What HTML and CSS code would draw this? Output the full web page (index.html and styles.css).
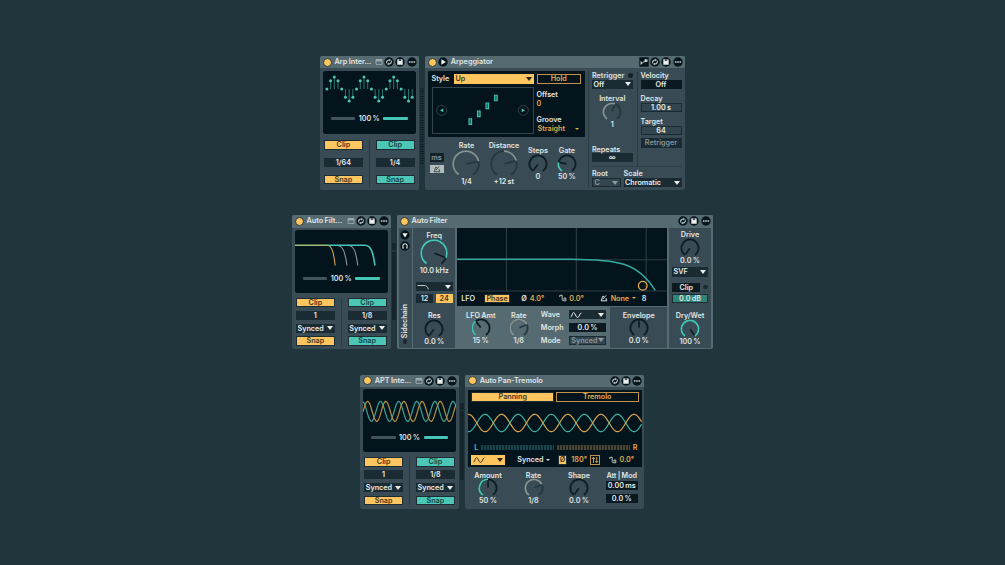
FILE: index.html
```html
<!DOCTYPE html>
<html lang="en">
<head>
    <meta charset="UTF-8">
    <meta name="viewport" content="width=device-width, initial-scale=1.0">
    <title>Modulators</title>
    <link rel="stylesheet" href="styles.css">
</head>
<body>
    <!-- Shared icons -->
    <svg class="defs">
        <symbol id="i-swap" viewBox="0 0 10 10">
            <circle cx="5" cy="5" r="4.7" fill="#07161d"/>
            <path d="M2.6 6.3C2.2 4.2 3.8 2.7 5.8 3M7.4 3.7C7.8 5.8 6.2 7.3 4.2 7" fill="none" stroke="#b9c6c8" stroke-width="1.1"/>
            <path d="M5.2 1.6L7 3.1 5.2 4.5zM4.8 8.4L3 6.9 4.8 5.5z" fill="#b9c6c8"/>
        </symbol>
        <symbol id="i-save" viewBox="0 0 10 10">
            <circle cx="5" cy="5" r="4.7" fill="#07161d"/>
            <path d="M2.3 2.3H7L7.7 3V7.7H2.3z" fill="#eaefed"/>
            <path d="M3.8 2.3H6.2V4H3.8z" fill="#3b4d55"/>
        </symbol>
        <symbol id="i-more" viewBox="0 0 10 10">
            <circle cx="5" cy="5" r="4.7" fill="#07161d"/>
            <path d="M1.9 4.3h1.600v1.500H1.9zM4.2 4.3h1.600v1.500h-1.600zM6.5 4.3H8.100v1.500H6.5z" fill="#c9d3d3"/>
        </symbol>
        <symbol id="i-window" viewBox="0 0 8 8">
            <path d="M1 1.6H7V6.4H1zM1 3H7" fill="none" stroke="#a5b2b4" stroke-width=".8"/>
            <path d="M1 1.3H7V2.8H1z" fill="#a5b2b4"/>
        </symbol>
        <symbol id="i-steps" viewBox="0 0 10 10">
            <path d="M.3.3H9.7V9.7H.3z" fill="#07161d"/>
            <path d="M1.6 4L4 6 1.6 8zM4.2 4.2h1.400v1.400H4.200zM5.600 2.200h2.800v2.800H5.600z" fill="#c9d3d3"/>
        </symbol>
        <symbol id="i-play" viewBox="0 0 10 10">
            <circle cx="5" cy="5" r="4.7" fill="#07161d"/>
            <path d="M3.4 2.2L7.8 5 3.4 7.8z" fill="#f2f5f4"/>
        </symbol>
        <symbol id="i-down" viewBox="0 0 10 10">
            <circle cx="5" cy="5" r="4.7" fill="#07161d"/>
            <path d="M2.4 3.2H7.6L5 7.6z" fill="#f2f5f4"/>
        </symbol>
        <symbol id="i-phones" viewBox="0 0 10 10">
            <circle cx="5" cy="5" r="4.7" fill="#07161d"/>
            <path d="M3.9 7H2.900V4.900A2.1 2.1 0 0 1 7.100 4.900V7H6.100" fill="none" stroke="#d3dcdb" stroke-width="1.100"/>
        </symbol>
        <symbol id="i-offset" viewBox="0 0 8 8">
            <path d="M.8 3V1.300H3.200V5.600C3.200 7 5 7 5 5.600V4H6.800V6.800H4.600" fill="none" stroke="#b9c3c2" stroke-width="1"/>
        </symbol>
        <symbol id="i-metro" viewBox="0 0 8 8">
            <path d="M1.2 6.8H6.8L6 4.200M1.2 6.8L2.6 2.4H4M3 5.2L6 1.400" fill="none" stroke="currentColor" stroke-width="1"/>
        </symbol>
        <symbol id="i-sine" viewBox="0 0 12 8">
            <path d="M.6 6C2.200 6 2 1.600 3.600 1.600S5.600 6.400 7.600 6.400 9.400 2 11.400 2" fill="none" stroke="currentColor" stroke-width="1"/>
        </symbol>
        <symbol id="i-flip" viewBox="0 0 8 8">
            <path d="M2.500 7V1.800M1 3L2.500 1.200 4 3M5.700 1V6.200M4.200 5L5.700 6.800 7.200 5" fill="none" stroke="currentColor" stroke-width=".9"/>
        </symbol>
    </svg>

    <main class="rack">
        <!-- Arpeggiator -->
        <section class="chain">
            <article class="device mod">
                <header class="bar">
                    <i class="power"></i><h2>Arp Inter...</h2>
                    <svg class="win"><use href="#i-window"/></svg><svg class="ico"><use href="#i-swap"/></svg><svg class="ico"><use href="#i-save"/></svg><svg class="ico"><use href="#i-more"/></svg>
                </header>
                <div class="screen">
                    <svg class="wave" id="stems" viewBox="0 0 93 38"></svg>
                    <div class="mix"><i></i><span>100 %</span><i class="on"></i></div>
                </div>
                <div class="pair roomy">
                    <div class="side"><b class="chip amber">Clip</b><span class="box">1/64</span><b class="chip amber">Snap</b></div>
                    <div class="side"><b class="chip teal">Clip</b><span class="box">1/4</span><b class="chip teal">Snap</b></div>
                </div>
            </article>
            <div class="link dots"></div>
            <article class="device arp">
                <header class="bar">
                    <i class="power"></i><svg class="ico"><use href="#i-play"/></svg><h2>Arpeggiator</h2>
                    <svg class="ico"><use href="#i-steps"/></svg><svg class="ico"><use href="#i-swap"/></svg><svg class="ico"><use href="#i-save"/></svg><svg class="ico"><use href="#i-more"/></svg>
                </header>
                <div class="arp-body">
                    <div class="arp-main">
                        <div class="arp-screen">
                            <div class="arp-left">
                                <div class="style"><span>Style</span><b class="select amber">Up</b></div>
                                <svg class="pattern" viewBox="0 0 102 47">
                                    <rect x=".5" y=".5" width="101" height="46" fill="none" stroke="#34454e"/>
                                    <g fill="none" stroke="#34454e" stroke-width=".9"><circle cx="9.7" cy="23.3" r="5"/><circle cx="91.3" cy="23.3" r="5"/></g>
                                    <path d="M11.3 21.4v3.8L8 23.3zM89.7 21.4v3.8l3.3-1.9z" fill="#45c5b5"/>
                                    <g fill="#17655f" stroke="#3fbfae" stroke-width="1.1"><path d="M37 31.8h2.6v5.6H37zM45.5 24h2.6v5.6h-2.6zM54 16h2.6v5.6H54zM62.6 8.2h2.6v5.6h-2.6z"/></g>
                                </svg>
                            </div>
                            <div class="arp-opts">
                                <b class="outline">Hold</b>
                                <span class="t8 mt1">Offset</span><span class="gold">0</span>
                                <span class="t8 mt2">Groove</span><span class="gold groove">Straight <i class="tri"></i></span>
                            </div>
                        </div>
                        <div class="arp-knobs">
                            <div class="sync"><span>ms</span><span class="sel"><svg><use href="#i-metro"/></svg></span></div>
                            <div class="knob big w37" data-to="78" data-tone="gray"><span>Rate</span><em>1/4</em></div>
                            <div class="knob big w37" data-from="0" data-to="75" data-tone="gray"><span>Distance</span><em>+12 st</em></div>
                            <div class="knob w30" data-to="-145"><span>Steps</span><em>0</em></div>
                            <div class="knob w27" data-to="-78"><span>Gate</span><em>50 %</em></div>
                        </div>
                    </div>
                    <div class="arp-side">
                        <div class="arp-cols">
                            <div class="col">
                                <span class="t8 led">Retrigger</span><b class="select">Off</b>
                                <div class="knob interval" data-to="20" data-tone="gray"><span>Interval</span><em>1</em></div>
                                <span class="t8 rep">Repeats</span><b class="box">∞</b>
                            </div>
                            <div class="col line">
                                <span class="t8">Velocity</span><b class="box flat">Off</b>
                                <span class="t8 gap">Decay</span><b class="box ring">1.00 s</b>
                                <span class="t8 gap">Target</span><b class="box ring">64</b>
                                <b class="box dim">Retrigger</b>
                            </div>
                        </div>
                        <div class="scale">
                            <div><span class="t8">Root</span><b class="select off">C</b></div>
                            <div><span class="t8">Scale</span><b class="select">Chromatic</b></div>
                        </div>
                    </div>
                </div>
            </article>
        </section>

        <!-- Auto Filter -->
        <section class="chain">
            <article class="device mod">
                <header class="bar">
                    <i class="power"></i><h2>Auto Filt...</h2>
                    <svg class="win"><use href="#i-window"/></svg><svg class="ico"><use href="#i-swap"/></svg><svg class="ico"><use href="#i-save"/></svg><svg class="ico"><use href="#i-more"/></svg>
                </header>
                <div class="screen">
                    <svg class="wave" viewBox="0 0 93 38">
                        <g class="curves">
                            <path d="M32 15.2C37 15.5 38.5 22 40.2 35.5" stroke="#d7a54d"/>
                            <path d="M42 15.2C48 15.5 50 22 52 35.5" stroke="#8b9799"/>
                            <path d="M53 15.2C59 15.5 61 22 62.8 35.5" stroke="#8b9799"/>
                            <path class="main" d="M33 15.2H70C76 15.5 78 22 80 35.5" stroke="#45c5b5"/>
                            <path class="main" d="M0 15.2H33" stroke="#9dbb77"/>
                        </g>
                    </svg>
                    <div class="mix"><i></i><span>100 %</span><i class="on"></i></div>
                </div>
                <div class="pair">
                    <div class="side"><b class="chip amber">Clip</b><span class="box">1</span><b class="select">Synced</b><b class="chip amber">Snap</b></div>
                    <div class="side"><b class="chip teal">Clip</b><span class="box">1/8</span><b class="select">Synced</b><b class="chip teal">Snap</b></div>
                </div>
            </article>
            <div class="link"></div>
            <article class="device filter">
                <header class="bar">
                    <i class="power"></i><h2>Auto Filter</h2>
                    <svg class="ico"><use href="#i-swap"/></svg><svg class="ico"><use href="#i-save"/></svg><svg class="ico"><use href="#i-more"/></svg>
                </header>
                <div class="filter-body">
                    <div class="panel sidechain">
                        <svg class="ico"><use href="#i-down"/></svg><svg class="ico"><use href="#i-phones"/></svg>
                        <span>Sidechain</span><i class="dot"></i>
                    </div>
                    <div class="panel freq">
                        <div class="knob big" data-to="112"><span>Freq</span><em>10.0 kHz</em></div>
                        <b class="select shape"><svg viewBox="0 0 12 8"><path d="M.5 2.5H7C9.5 2.5 11 4 11.3 6.5" fill="none" stroke="#b9c3c2"/></svg></b>
                        <div class="slopes"><b>12</b><b class="amber">24</b></div>
                        <div class="knob" data-to="-145"><span>Res</span><em>0.0 %</em></div>
                    </div>
                    <div class="center">
                        <div class="display">
                            <svg viewBox="0 0 211 64">
                                <path d="M49.5 0V63M119.5 0V63M189.5 0V63M0 31.8H211M0 63H211" stroke="#303c42" stroke-width="1.1" fill="none"/>
                                <path d="M0 31.2H115C160 31.5 181 34 198.5 62.5" stroke="#36aa9e" stroke-width="1.4" fill="none"/>
                                <circle cx="186" cy="57.8" r="4.3" fill="none" stroke="#e5ad4e" stroke-width="1.3"/>
                            </svg>
                            <div class="lfo">
                                <span>LFO</span><b class="chip amber">Phase</b>
                                <span class="phase">Ø <u>4.0°</u></span>
                                <span class="offs"><svg><use href="#i-offset"/></svg><u>0.0°</u></span>
                                <span class="quant"><svg><use href="#i-metro"/></svg><u>None</u><i class="tri"></i></span><span>8</span>
                            </div>
                        </div>
                        <div class="lower">
                            <div class="knob w48" data-to="-38"><span>LFO Amt</span><em>15 %</em></div>
                            <div class="knob w28" data-to="65" data-tone="gray"><span>Rate</span><em>1/8</em></div>
                            <div class="params">
                                <span>Wave</span><b class="select"><svg><use href="#i-sine"/></svg></b>
                                <span>Morph</span><b class="box flat">0.0 %</b>
                                <span>Mode</span><b class="select off">Synced</b>
                            </div>
                            <div class="panel env"><div class="knob" data-from="0" data-to="0"><span>Envelope</span><em>0.0 %</em></div></div>
                        </div>
                    </div>
                    <div class="panel out">
                        <div class="knob" data-to="-145"><span>Drive</span><em>0.0 %</em></div>
                        <b class="select">SVF</b>
                        <div class="cliprow"><b class="box flat">Clip</b><i class="dot"></i></div>
                        <b class="db">0.0 dB</b>
                        <div class="knob" data-to="145"><span>Dry/Wet</span><em>100 %</em></div>
                    </div>
                </div>
            </article>
        </section>

        <!-- Auto Pan-Tremolo -->
        <section class="chain">
            <article class="device mod">
                <header class="bar">
                    <i class="power"></i><h2>APT Inte...</h2>
                    <svg class="win"><use href="#i-window"/></svg><svg class="ico"><use href="#i-swap"/></svg><svg class="ico"><use href="#i-save"/></svg><svg class="ico"><use href="#i-more"/></svg>
                </header>
                <div class="screen">
                    <svg class="wave" viewBox="0 0 93 38">
                        <path data-sine="17.5,22.4,10,18.15,93" stroke="#36a496"/>
                        <path data-sine="22.8,22.4,10,18.15,93" stroke="#b99146"/>
                    </svg>
                    <div class="mix"><i></i><span>100 %</span><i class="on"></i></div>
                </div>
                <div class="pair">
                    <div class="side"><b class="chip amber">Clip</b><span class="box">1</span><b class="select">Synced</b><b class="chip amber">Snap</b></div>
                    <div class="side"><b class="chip teal">Clip</b><span class="box">1/8</span><b class="select">Synced</b><b class="chip teal">Snap</b></div>
                </div>
            </article>
            <div class="link"></div>
            <article class="device pan">
                <header class="bar">
                    <i class="power"></i><h2>Auto Pan-Tremolo</h2>
                    <svg class="ico"><use href="#i-swap"/></svg><svg class="ico"><use href="#i-save"/></svg><svg class="ico"><use href="#i-more"/></svg>
                </header>
                <div class="pan-screen">
                    <div class="tabs"><b class="chip amber">Panning</b><b class="outline">Tremolo</b></div>
                    <svg class="pan-wave" viewBox="0 0 174 40">
                        <path data-sine="17.1,21,8.7,33.2,174" stroke="#3cb3a4"/>
                        <path data-sine="0.5,21,8.7,33.2,174" stroke="#dba64c"/>
                    </svg>
                    <div class="level"><span>L</span><i></i><i class="r"></i><u>R</u></div>
                    <div class="pan-row">
                        <b class="select amber"><svg><use href="#i-sine"/></svg></b>
                        <span class="sync-sel">Synced <i class="tri"></i></span>
                        <b class="chip amber phi">Ø</b><u>180°</u><b class="outline flip"><svg><use href="#i-flip"/></svg></b>
                        <span class="offs"><svg><use href="#i-offset"/></svg><u>0.0°</u></span>
                    </div>
                </div>
                <div class="pan-knobs">
                    <div class="knob" data-to="0"><span>Amount</span><em>50 %</em></div>
                    <div class="knob" data-to="65" data-tone="gray"><span>Rate</span><em>1/8</em></div>
                    <div class="knob" data-to="-145"><span>Shape</span><em>0.0 %</em></div>
                    <div class="att"><span>Att | Mod</span><b class="box flat">0.00 ms</b><b class="box flat">0.0 %</b></div>
                </div>
            </article>
        </section>
    </main>
    <script src="script.js"></script>
</body>
</html>
```
FILE: styles.css
```css
* { box-sizing: border-box; }

body {
    margin: 0;
    height: 565px;
    overflow: hidden;
    background: #21353d;
    color: #e2e7e4;
    font: 600 7.2px/9px Inter, "Liberation Sans", sans-serif;
    word-spacing: -.5px;
}

h2 { margin: 0; font-size: 7.3px; font-weight: 600; line-height: 12px; white-space: nowrap; }
b { font-weight: 600; }
em { font-style: normal; }
u { text-decoration: none; color: #e5ad4e; }
svg { display: block; flex: none; }
.defs { display: none; }

.rack { width: 1004.5px; padding-top: 56px; display: flex; flex-direction: column; gap: 25.3px; }
.chain { display: flex; justify-content: center; height: 134px; }

.device {
    flex: none;
    display: flex;
    flex-direction: column;
    background: #394b55;
    border-radius: 2px;
    overflow: hidden;
}
.mod { width: 98.5px; }
.arp { width: 259.5px; }
.filter { width: 315.5px; background: #566a72; }
.pan { width: 179px; }

/* Title bar */
.bar { display: flex; align-items: center; gap: 1.3px; height: 12.3px; flex: none; padding: 0 2px; background: #566a72; }
.bar h2 { flex: 1; margin-left: 1px; }
.bar .power { width: 9px; height: 9px; margin: 0 .6px; border: .6px solid #26363d; border-radius: 50%; background: #ffc55e; flex: none; }
.ico { width: 10px; height: 10px; }
.win { width: 8px; height: 8px; }

/* Connection between devices */
.link { width: 6.5px; padding: 28px 1px 28px 1.5px; }
.link::before { content: ""; display: block; height: 77px; background: linear-gradient(#16252c 0 7px, #21353d 7px 8.5px, #16252c 8.5px); }
.dots::before { height: 76px; margin-top: 4px; background: radial-gradient(circle, #0f1e25 .75px, transparent 1px) 0 0 / 2px 2.4px; }

/* Buttons and fields */
.chip, .box, .select, .outline { display: block; height: 9.3px; line-height: 9.6px; text-align: center; white-space: nowrap; }
.chip { border: .6px solid #1d2b32; line-height: 8.6px; }
.amber { background: #ffc55e; color: #3f3520; }
.teal { background: #4cc6b7; color: #134540; }
.box, .select { background: #1b2b33; color: #e9eeeb; }
.box.flat { background: #0b1a21; }
.ring { background: #33454e; border: 1px solid #1b2b33; line-height: 8px; }
.dim { color: #87949a; }
.outline { border: 1px solid #c0924a; color: #e5ad4e; line-height: 8px; }
.select { display: flex; align-items: center; justify-content: space-between; padding: 0 2px 0 1.5px; }
.select::after { content: ""; border: 3px solid transparent; border-top: 4.6px solid #e9eeeb; border-bottom: 0; }
.select.amber { background: #ffc55e; color: #3f3520; }
.select.amber::after { border-top-color: #2b2416; }
.select svg { width: 12px; height: 8px; }
.select.off { background: #33454e; border: 1px solid #1b2b33; color: #8d999c; }
.select.off::after { border-top-color: #8d999c; }
.t8 { display: block; height: 8px; }
.gold { color: #e5ad4e; }
.tri { display: inline-block; border: 2.2px solid transparent; border-top: 2.7px solid #e5ad4e; border-bottom: 0; vertical-align: middle; }
.dot { width: 4.5px; height: 4.5px; border-radius: 50%; background: #1b2b33; }
.panel { background: #394b55; }

/* Modulator */
.screen { margin: 2.5px 3px 0; height: 63px; border-radius: 2.5px; background: #03141c; overflow: hidden; flex: none; }
.wave { width: 93px; height: 38px; margin-left: -.2px; }
.mix { display: flex; justify-content: center; align-items: center; height: 20px; }
.mix i { width: 24.5px; height: 3px; border-radius: 1px; background: #42555d; }
.mix .on { background: #45c5b5; }
.mix span { width: 28px; text-align: center; }
.pair { display: flex; gap: 12.5px; margin: 5px 4px 0; height: 48px; }
.pair::before { content: ""; width: 1px; height: 48px; order: 1; margin: 0 -6.5px; background: #2b3c44; }
.side:last-child { order: 2; }
.side { flex: 1; display: grid; grid-template-rows: repeat(4, 9.3px); row-gap: 3.5px; }
.roomy { margin-top: 6.5px; }
.roomy .side { row-gap: 8px; grid-template-rows: repeat(3, 9.3px); }
.curves { stroke-width: 1.1; }
.curves .main { stroke-width: 1.6; }

/* Knob */
.knob { display: flex; flex-direction: column; align-items: center; white-space: nowrap; }
.knob span, .knob em { height: 8px; }
.knob svg { width: 20px; height: 20px; margin: -.5px 0 -2px; }
.knob.big svg { width: 30px; height: 30px; margin: -1px 0 -2px; }
.w37 { width: 37.5px; }
.w30 { width: 30.5px; }
.w27 { width: 27.5px; }
.w48 { width: 48px; }
.w28 { width: 28px; }

/* Arpeggiator */
.arp-body { display: flex; flex: 1; }
.arp-main { flex: none; width: 162.5px; padding: 2.7px 0 0 3px; }
.arp-screen { display: flex; gap: 3px; width: 156.5px; height: 66px; padding: 3.5px 3.5px 0; background: #03141c; border-radius: 1px; }
.style { display: flex; justify-content: space-between; line-height: 9.5px; }
.style .select { width: 79.5px; height: 9.5px; }
.pattern { width: 102px; height: 47px; margin-top: 3px; }
.arp-opts { flex: 1; display: flex; flex-direction: column; }
.mt1 { margin: 6px 0 1px; }
.mt2 { margin: 7.5px 0 1px; }
.groove { display: flex; justify-content: space-between; align-items: center; padding: 0 2px 0 1px; }
.arp-knobs { display: flex; padding: 4.5px 0 0 1.5px; }
.arp-knobs .big svg { margin-top: 0; margin-bottom: -2.5px; }
.w30, .w27 { padding-top: 5px; }
.sync { width: 14px; margin: 12px 4.2px 0 0; display: grid; grid-template-rows: 9px 8.5px; row-gap: 2.5px; text-align: center; color: #8d999c; }
.sync span { background: #14232a; }
.sync .sel { background: #b3bcb9; color: #3a4a50; }
.sync svg { width: 8px; height: 8px; margin: 0 auto; }
.arp-side { flex: 1; border-left: 1px solid #2b3c44; margin: 3px 3px 4px 0; padding-left: 3.5px; }
.arp-cols { display: flex; height: 95.5px; border-bottom: 1px solid #2b3c44; }
.col { width: 40.5px; flex: none; }
.col .select, .col .box { margin-top: .5px; }
.led { display: flex; align-items: center; justify-content: space-between; }
.led::after { content: ""; width: 4.5px; height: 4.5px; border-radius: 50%; background: #14232a; }
.interval { margin-top: 5px; }
.rep { margin-top: 17px; }
.line { width: 45px; border-left: 1px solid #2b3c44; margin-left: 4px; padding-left: 3px; }
.gap { margin-top: 5px; }
.col .ring { height: 9.7px; }
.col .dim { margin-top: 3px; }
.scale { display: flex; gap: 3px; padding-top: 2.5px; }
.scale .select { margin-top: .7px; height: 9.5px; }
.scale div:first-child { width: 28.5px; }
.scale div:last-child { flex: 1; }

/* Auto Filter */
.filter-body { flex: 1; display: flex; gap: 1.5px; padding: 0 1.5px 1.5px; }
.sidechain { width: 13.3px; display: flex; flex-direction: column; align-items: center; padding: 2.5px 0 4px; gap: 1.3px; }
.sidechain span { writing-mode: vertical-rl; transform: rotate(180deg); margin-top: auto; line-height: 10px; }
.freq { width: 42px; padding: 3px 2.5px 0; }
.freq .select { margin: 8.5px 0 3px; }
.slopes { display: flex; gap: 2.5px; margin-bottom: 8px; }
.slopes b { flex: 1; height: 8.7px; text-align: center; background: #1b2b33; }
.slopes .amber { background: #ffc55e; }
.center { width: 210.7px; }
.display { background: #03141c; height: 78.3px; }
.display > svg { width: 210.7px; height: 64px; }
.lfo { display: flex; align-items: center; height: 13.5px; padding-left: 4.5px; }
.lfo .chip { width: 26px; margin: 0 11px 0 9px; }
.lfo > span, .pan-row > span { display: flex; align-items: center; }
.phase { gap: 3px; width: 38px; }
.offs { gap: 2px; }
.offs svg, .quant svg { width: 8px; height: 8px; }
.lfo .offs { width: 41px; }
.quant { gap: 2.5px; width: 41.5px; }
.lower { display: flex; height: 42px; }
.lower > .knob { padding-top: 5px; }
.params { display: grid; grid-template-columns: 28px 37.5px; grid-auto-rows: 9.5px; row-gap: 3.4px; width: 77.2px; padding: 4px 0 0 8px; line-height: 10px; }
.params .box, .params .select { height: 9.5px; }
.env { flex: 1; margin-top: 1.5px; padding-top: 3.5px; }
.out { width: 42px; padding: 2.7px 3px 0; }
.out .select { margin-top: 3.5px; }
.cliprow { display: flex; align-items: center; justify-content: space-between; margin: 6px 0 2.4px; }
.cliprow .box { width: 28.5px; }
.db { display: block; height: 9px; line-height: 8.4px; text-align: center; background: #2f8577; border: .6px solid #1d2b32; margin-bottom: 7.9px; }

/* Auto Pan-Tremolo */
.pan-screen { margin: 2.7px 2.5px 0 3px; height: 77.5px; background: #03141c; padding-top: 2.7px; }
.tabs { display: grid; grid-template-columns: 1fr 1fr; gap: 1.5px; padding: 0 3px; }
.tabs b { height: 9.5px; }
.pan-wave { width: 173.5px; height: 40px; }
.wave path, .pan-wave path { fill: none; }
.wave > path, .pan-wave path { stroke-width: 1.2; }
.level { display: flex; gap: 2.5px; align-items: center; height: 8px; padding: 0 3.5px 0 6px; margin-top: 1.5px; color: #45c5b5; }
.level span { width: 4px; }
.level i { width: 73.5px; height: 5px; background: repeating-linear-gradient(90deg, #17434a 0 1.6px, #0a2028 1.6px 3px); }
.level .r { background: repeating-linear-gradient(90deg, #4b4634 0 1.6px, #151f20 1.6px 3px); }
.pan-row { display: flex; align-items: center; height: 13px; padding-left: 3px; margin-top: 2.2px; }
.pan-row .select { width: 34px; }
.sync-sel { gap: 3px; width: 40.5px; margin-left: 12px; }
.sync-sel .tri { border-top-color: #dde3e0; }
.phi { width: 9.5px; margin-right: 4px; }
.flip { width: 10px; height: 9.7px; margin: 0 9px 0 3.5px; }
.flip svg { width: 8px; height: 8px; }
.pan-knobs { display: flex; padding-top: 3.5px; }
.pan-knobs .knob { width: 45.5px; }
.att { width: 40px; text-align: center; }
.att .box { width: 32.5px; margin: 1.5px auto 3.7px; }
```
FILE: script.js
```js
const NS = 'http://www.w3.org/2000/svg';

function make(tag, attrs, parent) {
    const el = document.createElementNS(NS, tag);
    for (const key in attrs) el.setAttribute(key, attrs[key]);
    parent.appendChild(el);
    return el;
}

// angles are measured clockwise from the top
function point(c, r, deg) {
    const a = deg * Math.PI / 180;
    return `${(c + r * Math.sin(a)).toFixed(2)} ${(c - r * Math.cos(a)).toFixed(2)}`;
}

function arc(c, r, from, to) {
    return `M${point(c, r, from)}A${r} ${r} 0 ${to - from > 180 ? 1 : 0} 1 ${point(c, r, to)}`;
}

document.querySelectorAll('.knob').forEach(knob => {
    const big = knob.classList.contains('big');
    const gray = knob.dataset.tone === 'gray';
    const c = big ? 15 : 10;
    const r = big ? 12.8 : 8.6;
    const from = Number(knob.dataset.from || -145);
    const to = Number(knob.dataset.to);
    const svg = document.createElementNS(NS, 'svg');
    svg.setAttribute('viewBox', `0 0 ${c * 2} ${c * 2}`);
    make('path', { d: arc(c, r, -145, 145), fill: 'none', stroke: gray ? '#26373f' : '#0e1d25', 'stroke-width': 1.8 }, svg);
    if (to > from) {
        make('path', { d: arc(c, r, from, to), fill: 'none', stroke: gray ? '#87938f' : '#45c5b5', 'stroke-width': 1.8 }, svg);
    }
    make('path', { d: `M${point(c, 0.5, to)}L${point(c, r - 0.8, to)}`, stroke: gray ? '#26373f' : '#0c1a21', 'stroke-width': 1.6 }, svg);
    knob.insertBefore(svg, knob.querySelector('em'));
});

// data-sine = peak x, middle y, amplitude, period, width
document.querySelectorAll('[data-sine]').forEach(path => {
    const [peak, mid, amp, period, width] = path.dataset.sine.split(',').map(Number);
    let d = '';
    for (let x = 0; x <= width; x += 0.5) {
        const y = mid - amp * Math.cos((x - peak) / period * 2 * Math.PI);
        d += (d ? 'L' : 'M') + x + ' ' + y.toFixed(2);
    }
    path.setAttribute('d', d);
});

// stems of the stepped sine
const stems = document.getElementById('stems');
const steps = [0, 8.3, 12, 8.3, 0, -8.3, -12, -8.3];
for (let i = 0; i < 24; i++) {
    const x = 3.9 + i * 3.71;
    const y = 18 - steps[i % 8];
    make('line', { x1: x, x2: x, y1: 18, y2: y, stroke: '#2a766f', 'stroke-width': 1 }, stems);
    make('circle', { cx: x, cy: y, r: 1.5, fill: '#4cc6b7' }, stems);
}
```
